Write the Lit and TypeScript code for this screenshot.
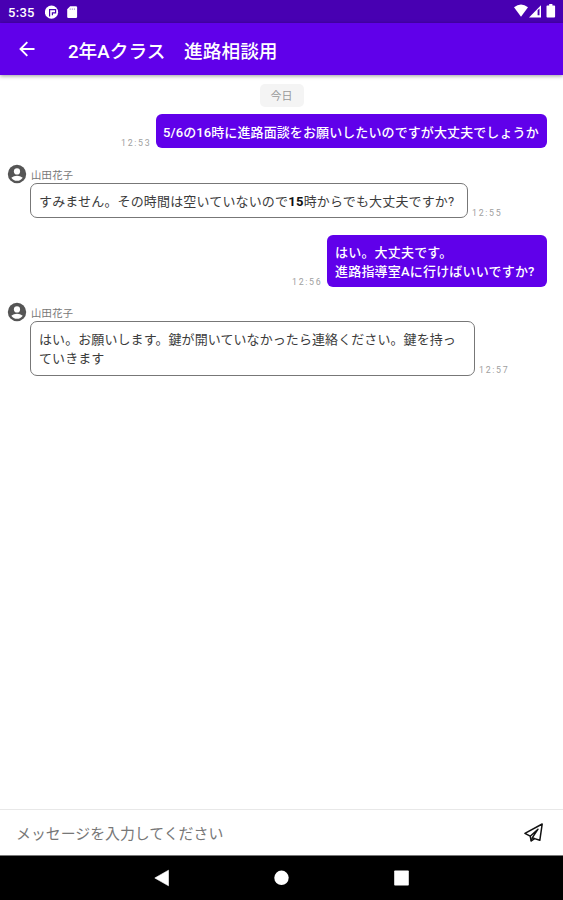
import { LitElement, html, css, nothing } from "lit";
import { customElement, property } from "lit/decorators.js";

interface Message {
  kind: "sent" | "received";
  lines: string[];
  time: string;
  size: "a" | "b" | "c" | "d";
  author?: string;
}

const MESSAGES: Message[] = [
  { kind: "sent", size: "a", time: "12:53", lines: ["5/6の16時に進路面談をお願いしたいのですが大丈夫でしょうか"] },
  { kind: "received", size: "b", time: "12:55", author: "山田花子", lines: ["すみません。その時間は空いていないので15時からでも大丈夫ですか?"] },
  { kind: "sent", size: "c", time: "12:56", lines: ["はい。大丈夫です。", "進路指導室Aに行けばいいですか?"] },
  {
    kind: "received", size: "d", time: "12:57", author: "山田花子",
    lines: ["はい。お願いします。鍵が開いていなかったら連絡ください。鍵を持っ", "ていきます"],
  },
];

@customElement("status-bar")
class StatusBar extends LitElement {
  static styles = css`
    :host { display: flex; align-items: center; height: 23px; background: #4800b2; color: #fff; padding: 0 6px 0 8px; box-sizing: border-box; }
    .clock { font: 500 13px/23px Roboto, sans-serif; letter-spacing: .3px; width: 37px; padding-top: 1px; box-sizing: border-box; }
    svg { display: block; fill: currentColor; }
    .gap { flex: 1; }
  `;
  render() {
    return html`
      <span class="clock">5:35</span>
      <svg width="34" height="23" viewBox="0 0 34 23">
        <circle cx="6.5" cy="12.2" r="6.6" />
        <path d="M4.6 16.4V9.7h6v3.2H7.4v2.4" fill="none" stroke="#4800b2" stroke-width="1.2" />
        <path d="M25.2 6.3h5.7q1.2 0 1.2 1.2v9.2q0 1.2-1.2 1.2h-7.5q-1.2 0-1.2-1.2V9.3z" />
        <path d="M25.2 8.3v1.7M27.3 8.3v1.7M29.4 8.3v1.7" stroke="#4800b2" stroke-width=".4" />
      </svg>
      <span class="gap"></span>
      <svg width="44" height="23" viewBox="0 0 44 23">
        <path d="M1 7.2Q8 2 15 7.2L8 16.8z" />
        <path d="M16 17.5 28 5.2v12.3z" />
        <path d="M24.6 10.2 26.5 8.4v6.9h-1.9z" fill="#4800b2" />
        <path d="M34.4 5.4h1.8V4.1h3.2v1.3h1.8q.9 0 .9.9v10.1q0 1-.9 1h-6.8q-.9 0-.9-1V6.3q0-.9.9-.9z" />
      </svg>`;
  }
}

@customElement("chat-message")
class ChatMessage extends LitElement {
  @property({ attribute: false }) message!: Message;
  static styles = css`
    :host { display: block; font-family: Roboto, "Noto Sans CJK JP", sans-serif; }
    .author { display: flex; align-items: center; height: 18px; padding-left: 7px; }
    .author svg { display: block; width: 20px; height: 20px; fill: #555; }
    .name { font-size: 10.3px; line-height: 18px; letter-spacing: .3px; color: #777; margin-left: 4px; padding-top: 3px; }
    .row { display: flex; align-items: flex-end; }
    .sent { justify-content: flex-end; padding-right: 16px; }
    .received { padding-left: 30px; }
    .bubble { box-sizing: border-box; border-radius: 6px; font-size: 13px; line-height: 18.5px; white-space: nowrap; }
    .sent .bubble { background: #6000ea; color: #fff; font-weight: 500; padding: 9px 0 0 8px; }
    .received .bubble { border: 1px solid #777; color: #3c3c3c; padding: 9px 0 0 8px; border-radius: 7px; }
    .row .a { width: 391px; height: 34px; padding: 10px 0 0 7px; letter-spacing: .1px; }
    .b { width: 438px; height: 35px; letter-spacing: .155px; }
    .c { width: 220px; height: 52px; letter-spacing: .19px; }
    .d { width: 445px; height: 55px; letter-spacing: .08px; }
    .time { font-size: 8.8px; line-height: 10px; color: #a0a0a0; letter-spacing: 1.7px; width: 31px; }
    .sent .time { margin-right: 4px; }
    .received .time { margin-left: 4px; }
    .d + .time { margin-bottom: 1px; }
    .strong { font-weight: 700; color: #111; letter-spacing: .3px; }
  `;
  render() {
    const m = this.message;
    const time = html`<span class="time">${m.time}</span>`;
    const body = m.lines.map((line) => {
      const parts = line.split(/(15)/);
      return html`<div>${parts.map((p) => (p === "15" ? html`<span class="strong">15</span>` : p))}</div>`;
    });
    const bubble = html`<div class="bubble ${m.size}">${body}</div>`;
    return html`
      ${m.author
        ? html`<div class="author">
            <svg viewBox="0 0 20 20">
              <circle cx="10" cy="10" r="9.2" />
              <circle cx="10" cy="7.4" r="3.1" fill="#fff" />
              <path d="M4.3 13.7Q6.8 11.7 10 11.7T15.7 13.7Q13.7 16.8 10 16.8T4.3 13.7z" fill="#fff" />
            </svg>
            <span class="name">${m.author}</span>
          </div>`
        : nothing}
      <div class="row ${m.kind}">${m.kind === "sent" ? html`${time}${bubble}` : html`${bubble}${time}`}</div>`;
  }
}

@customElement("app-root")
class AppRoot extends LitElement {
  static styles = css`
    :host { display: flex; flex-direction: column; height: 900px; background: #fff; font-family: Roboto, "Noto Sans CJK JP", sans-serif; overflow: hidden; }
    .bar { display: flex; align-items: center; height: 52px; flex: none; background: #6000ea; color: #fff; padding-left: 19px; box-shadow: 0 1px 4px rgba(0, 0, 0, .4); }
    .bar svg { display: block; }
    .title { font-size: 18.7px; font-weight: 500; line-height: 28px; margin-left: 33px; white-space: nowrap; padding-top: 5px; }
    .thread { flex: 1; min-height: 0; }
    .day { width: 44px; height: 23px; margin: 9px auto 7px; border-radius: 5px; background: #f4f4f4; color: #999; font-size: 11px; line-height: 26px; text-align: center; }
    .m1, .m2 { margin-top: 17px; }
    .m3 { margin-top: 16px; }
    .composer { display: flex; align-items: center; justify-content: space-between; height: 45px; flex: none; border-top: 1px solid #e8e8e8; padding: 0 18px 0 16px; }
    .hint { font-size: 14.9px; color: #777; white-space: nowrap; }
    .nav { height: 45px; flex: none; background: #000; border-top: 1px solid #777; box-sizing: border-box; }
    .nav svg { display: block; fill: #fff; }
  `;
  render() {
    return html`
      <status-bar></status-bar>
      <header class="bar">
        <svg width="16" height="18" viewBox="0 0 16 18"><path d="M15.5 9H1.5M8.3 2.2 1.5 9l6.8 6.8" fill="none" stroke="#fff" stroke-width="1.9" /></svg>
        <div class="title">2年Aクラス　進路相談用</div>
      </header>
      <main class="thread">
        <div class="day">今日</div>
        ${MESSAGES.map((m, i) => html`<chat-message class="m${i}" .message=${m}></chat-message>`)}
      </main>
      <footer class="composer">
        <span class="hint">メッセージを入力してください</span>
        <svg width="22" height="22" viewBox="0 0 22 22" fill="none" stroke="#111" stroke-width="1.5" stroke-linejoin="round">
          <path d="M1.9 11.3 19.2 2 16.8 18.3 11.6 16.6 8.2 19 7.2 14.2z" />
          <path d="M7.2 14.2 15 7.2 9.4 15.6 8.2 19M9.4 15.6l2.2 1" />
        </svg>
      </footer>
      <nav class="nav">
        <svg width="563" height="44" viewBox="0 1 563 44">
          <path d="M168.5 15.2v15.6L154.8 23z" stroke="#fff" stroke-width=".6" stroke-linejoin="round" />
          <circle cx="281.5" cy="22.8" r="7.2" />
          <rect x="394.2" y="15.5" width="14.6" height="15" rx=".8" />
        </svg>
      </nav>`;
  }
}
